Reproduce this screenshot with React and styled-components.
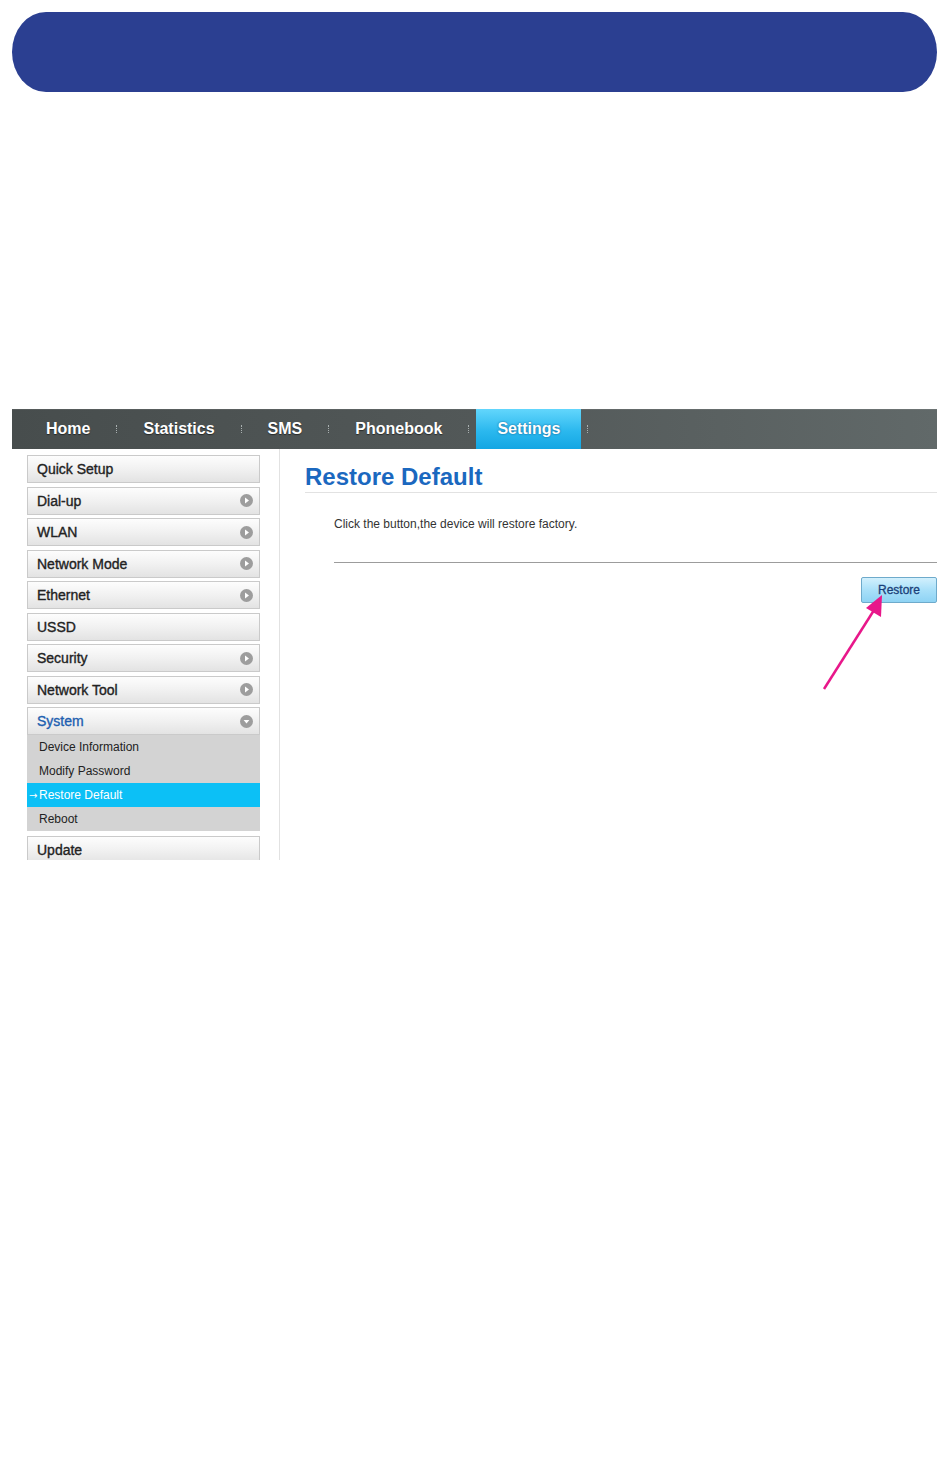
import React from 'react';
import styled, { createGlobalStyle } from 'styled-components';

const GlobalStyle = createGlobalStyle`
	html, body {
		margin: 0;
		padding: 0;
		background: #ffffff;
		font-family: 'Liberation Sans', Arial, sans-serif;
	}
`;

const Page = styled.div`
	width: 950px;
	height: 1464px;
	box-sizing: border-box;
	padding: 12px 13px 0 12px;
	background: #ffffff;
`;

const Banner = styled.div`
	height: 80px;
	background: #2b3f91;
	border-radius: 34px / 40px;
	margin-bottom: 317px;
`;

const NavBar = styled.nav`
	height: 40px;
	display: flex;
	align-items: stretch;
	padding-left: 8px;
	background: linear-gradient(to right, #474d4d 0%, #525858 50%, #616969 100%);
	box-shadow: inset 0 1px 0 rgba(255, 255, 255, 0.08);
`;

const NavItem = styled.div`
	display: flex;
	align-items: center;
	padding: 0 ${(p) => (p.$active ? '20px 0 21px' : '26px')};
	margin: 0 ${(p) => (p.$active ? '6px 0 7px' : '0')};
	font-size: 16px;
	font-weight: bold;
	color: #ffffff;
	text-shadow: ${(p) => (p.$active ? '0 0 2px rgba(0, 60, 110, 0.8)' : '0 1px 1px rgba(0, 0, 0, 0.5)')};
	background: ${(p) => (p.$active ? 'linear-gradient(to bottom, #62d6fc 0%, #2bb8ee 55%, #13a6e3 100%)' : 'transparent')};
`;

const NavSep = styled.span`
	align-self: center;
	width: 0;
	height: 8px;
	border-left: 1px dotted #a9b0b0;
`;

const Main = styled.div`
	display: flex;
	height: 411px;
	overflow: hidden;
`;

const Sidebar = styled.aside`
	width: 268px;
	box-sizing: border-box;
	padding: 6px 19px 0 15px;
	border-right: 1px solid #e2e2e2;
	flex-shrink: 0;
`;

const MenuItem = styled.div`
	height: 28px;
	box-sizing: border-box;
	margin-bottom: ${(p) => (p.$open ? '0' : '3.5px')};
	display: flex;
	align-items: center;
	justify-content: space-between;
	padding: 0 6px 0 9px;
	border: 1px solid #cacaca;
	background: linear-gradient(to bottom, #fdfdfd 0%, #f1f1f1 50%, #e3e3e3 100%);
	font-size: 14px;
	color: ${(p) => (p.$open ? '#1e5fb0' : '#222222')};
	-webkit-text-stroke: 0.35px ${(p) => (p.$open ? '#1e5fb0' : '#222222')};
`;

const SubMenu = styled.div`
	background: #d3d3d3;
	margin-bottom: 5px;
`;

const SubItem = styled.div`
	height: 24px;
	display: flex;
	align-items: center;
	padding-left: ${(p) => (p.$active ? '2px' : '12px')};
	font-size: 12px;
	color: ${(p) => (p.$active ? '#ffffff' : '#222222')};
	background: ${(p) => (p.$active ? '#0cc0f6' : 'transparent')};
`;

const SubArrow = styled.span`
	font-family: 'DejaVu Sans', sans-serif;
	font-size: 10px;
	width: 10px;
`;

const Content = styled.section`
	position: relative;
	flex: 1;
	padding-left: 25px;
`;

const Title = styled.h1`
	margin: 14px 0 0;
	padding-bottom: 1px;
	font-size: 24px;
	line-height: 28px;
	font-weight: bold;
	color: #1b68bf;
	border-bottom: 1px solid #e2e2e2;
`;

const Body = styled.div`
	padding-left: 29px;
`;

const Description = styled.p`
	margin: 23px 0 0;
	font-size: 12px;
	line-height: 16px;
	color: #333333;
`;

const Rule = styled.div`
	margin-top: 30px;
	height: 1px;
	background: #9c9c9c;
`;

const ButtonRow = styled.div`
	display: flex;
	justify-content: flex-end;
	padding-top: 14px;
`;

const RestoreButton = styled.button`
	width: 76px;
	height: 26px;
	border: 1px solid #6eaacb;
	border-radius: 2px;
	background: linear-gradient(to bottom, #d2f0fd 0%, #a9e0f9 50%, #8ed3f4 100%);
	font-family: 'Liberation Sans', Arial, sans-serif;
	font-size: 12px;
	color: #1a3f78;
	-webkit-text-stroke: 0.3px #1a3f78;
	padding: 0;
`;

const Arrow = styled.svg`
	position: absolute;
	left: 544px;
	top: 146px;
	overflow: visible;
`;

const CircleIcon = ({ down }) => (
	<svg width="13" height="13" viewBox="0 0 13 13">
		<circle cx="6.5" cy="6.5" r="6.5" fill="#9d9d9d" />
		{down ? (
			<polygon points="3.6,5 9.4,5 6.5,8.6" fill="#ffffff" />
		) : (
			<polygon points="5,3.5 9,6.5 5,9.5" fill="#ffffff" />
		)}
	</svg>
);

const menu = [
	{ label: 'Quick Setup', icon: false },
	{ label: 'Dial-up', icon: true },
	{ label: 'WLAN', icon: true },
	{ label: 'Network Mode', icon: true },
	{ label: 'Ethernet', icon: true },
	{ label: 'USSD', icon: false },
	{ label: 'Security', icon: true },
	{ label: 'Network Tool', icon: true },
];

const subItems = ['Device Information', 'Modify Password', 'Restore Default', 'Reboot'];

const navItems = ['Home', 'Statistics', 'SMS', 'Phonebook'];

const App = () => {
	return (
		<Page>
			<GlobalStyle />
			<Banner />
			<NavBar>
				{navItems.map((n) => (
					<React.Fragment key={n}>
						<NavItem>{n}</NavItem>
						<NavSep />
					</React.Fragment>
				))}
				<NavItem $active>Settings</NavItem>
				<NavSep />
			</NavBar>
			<Main>
				<Sidebar>
					{menu.map((m) => (
						<MenuItem key={m.label}>
							<span>{m.label}</span>
							{m.icon && <CircleIcon />}
						</MenuItem>
					))}
					<MenuItem $open>
						<span>System</span>
						<CircleIcon down />
					</MenuItem>
					<SubMenu>
						{subItems.map((s) => (
							<SubItem key={s} $active={s === 'Restore Default'}>
								{s === 'Restore Default' && <SubArrow>→</SubArrow>}
								{s}
							</SubItem>
						))}
					</SubMenu>
					<MenuItem>
						<span>Update</span>
					</MenuItem>
				</Sidebar>
				<Content>
					<Title>Restore Default</Title>
					<Body>
						<Description>Click the button,the device will restore factory.</Description>
						<Rule />
						<ButtonRow>
							<RestoreButton>Restore</RestoreButton>
						</ButtonRow>
					</Body>
					<Arrow width="60" height="94" viewBox="0 0 60 94">
						<line x1="0" y1="94" x2="52" y2="12" stroke="#e8178a" strokeWidth="2.5" />
						<polygon points="58,0 57,22 42,13" fill="#e8178a" />
					</Arrow>
				</Content>
			</Main>
		</Page>
	);
};

export default App;
